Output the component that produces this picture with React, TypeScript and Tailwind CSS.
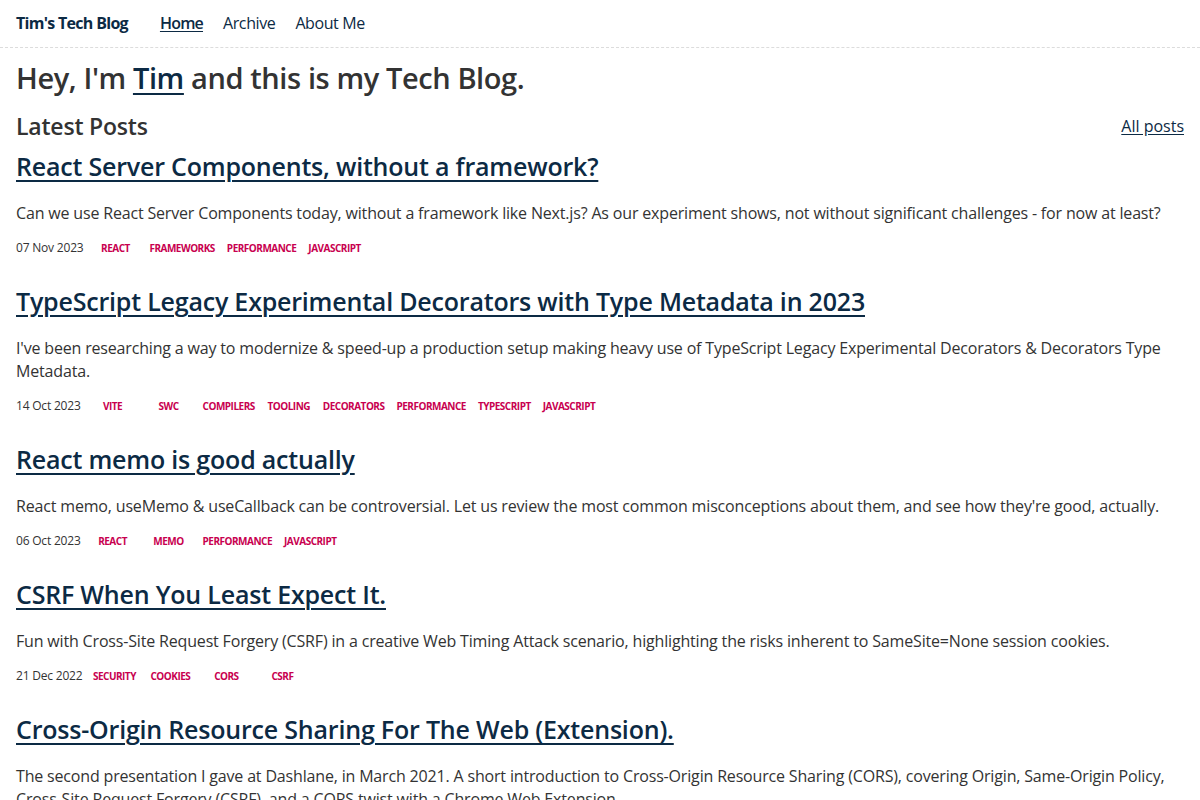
import React from "react";

const posts = [
  {
    title: "React Server Components, without a framework?",
    desc: "Can we use React Server Components today, without a framework like Next.js? As our experiment shows, not without significant challenges - for now at least?",
    date: "07 Nov 2023",
    tags: ["react", "frameworks", "performance", "javascript"],
  },
  {
    title: "TypeScript Legacy Experimental Decorators with Type Metadata in 2023",
    desc: "I've been researching a way to modernize & speed-up a production setup making heavy use of TypeScript Legacy Experimental Decorators & Decorators Type Metadata.",
    date: "14 Oct 2023",
    tags: ["vite", "swc", "compilers", "tooling", "decorators", "performance", "typescript", "javascript"],
  },
  {
    title: "React memo is good actually",
    desc: "React memo, useMemo & useCallback can be controversial. Let us review the most common misconceptions about them, and see how they're good, actually.",
    date: "06 Oct 2023",
    tags: ["react", "memo", "performance", "javascript"],
  },
  {
    title: "CSRF When You Least Expect It.",
    desc: "Fun with Cross-Site Request Forgery (CSRF) in a creative Web Timing Attack scenario, highlighting the risks inherent to SameSite=None session cookies.",
    date: "21 Dec 2022",
    tags: ["security", "cookies", "cors", "csrf"],
  },
  {
    title: "Cross-Origin Resource Sharing For The Web (Extension).",
    desc: "The second presentation I gave at Dashlane, in March 2021. A short introduction to Cross-Origin Resource Sharing (CORS), covering Origin, Same-Origin Policy, Cross-Site Request Forgery (CSRF), and a CORS twist with a Chrome Web Extension.",
    date: "18 Mar 2021",
    tags: ["security", "cors", "csrf"],
  },
];

export default function App() {
  return (
    <div
      className="min-h-screen bg-white text-[#333]"
      style={{ fontFamily: '"Open Sans", "Noto Sans", sans-serif' }}
    >
      <header className="flex h-[48px] items-center border-b border-dashed border-[#dcdcdc] px-4 pb-[2px] text-[16px] text-[#0c2a44]">
        <span className="font-bold tracking-[-0.7px]">Tim's Tech Blog</span>
        <nav className="ml-8 flex gap-5 tracking-[-0.4px]">
          <a className="font-semibold tracking-[-0.8px] underline underline-offset-2">Home</a>
          <a>Archive</a>
          <a>About Me</a>
        </nav>
      </header>
      <main className="px-4">
        <h1 className="mt-[10px] text-[29px] font-semibold leading-[40px] tracking-[-0.4px] text-[#333]">
          Hey, I'm <a className="text-[#0c2a44] underline underline-offset-4">Tim</a> and this is my Tech Blog.
        </h1>
        <div className="mt-[12px] flex items-center justify-between">
          <h2 className="text-[23px] font-semibold leading-[32px] tracking-[-0.2px]">Latest Posts</h2>
          <a className="text-[16px] text-[#0c2a44] underline underline-offset-2">All posts</a>
        </div>
        <div className="mt-[6px]">
          {posts.map((p) => (
            <article key={p.title} className="mb-[27px]">
              <h3 className="text-[25px] font-semibold leading-[36px] tracking-[-0.2px] text-[#0c2a44] underline underline-offset-4 decoration-2">
                {p.title}
              </h3>
              <p className="mt-[18px] text-[16px] leading-[23px] tracking-[-0.17px] text-[#333]">{p.desc}</p>
              <div className="mt-[15px] flex items-center leading-[16px]">
                <span className="text-[12px] tracking-[-0.2px] text-[#333]">{p.date}</span>
                <div className="ml-2 flex gap-2">
                  {p.tags.map((t) => (
                    <span
                      key={t}
                      className="min-w-[48px] px-[2px] text-center text-[10px] font-bold uppercase tracking-[-0.5px] text-[#c8004f]"
                    >
                      {t}
                    </span>
                  ))}
                </div>
              </div>
            </article>
          ))}
        </div>
      </main>
    </div>
  );
}
